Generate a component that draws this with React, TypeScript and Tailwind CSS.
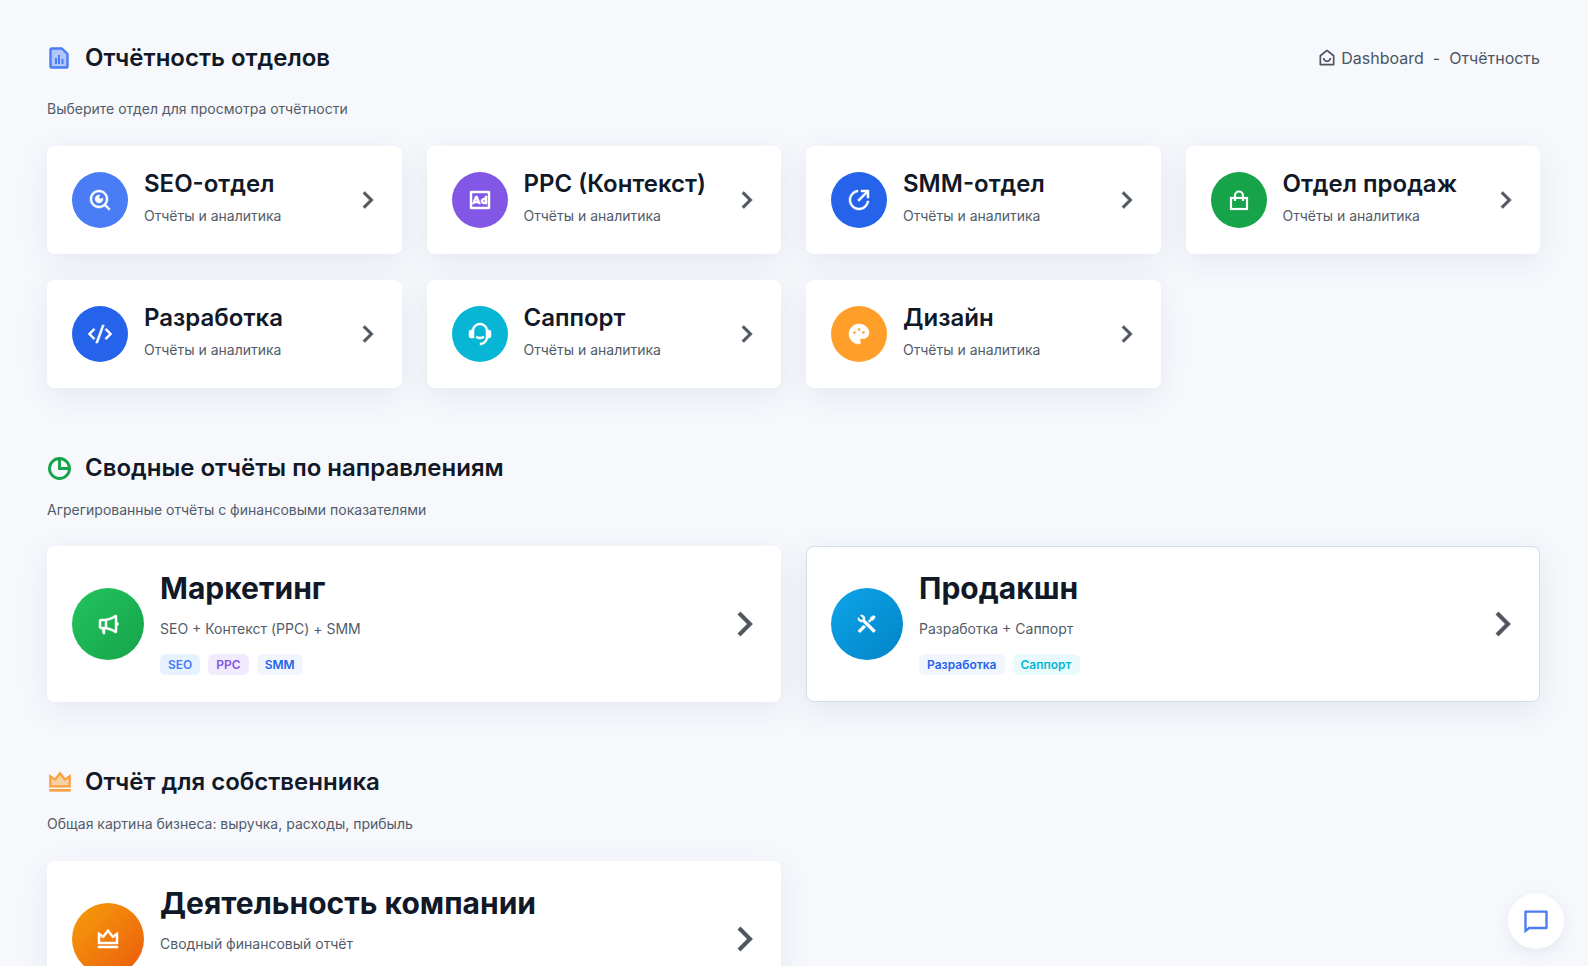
import React from 'react';
import {
  RiAdvertisementLine,
  RiArrowRightSLine,
  RiChat4Line,
  RiCodeSSlashLine,
  RiCustomerService2Fill,
  RiHomeSmile2Line,
  RiMegaphoneLine,
  RiPaletteFill,
  RiSearchEyeLine,
  RiShareCircleLine,
  RiToolsFill,
  RiVipCrownLine,
} from 'react-icons/ri';

type IconType = React.ComponentType<{ className?: string }>;

function BagIcon() {
  return (
    <svg viewBox="0 0 24 24" fill="none" stroke="currentColor" strokeWidth="2.2" className="h-[24px] w-[24px] text-white">
      <rect x="4" y="10" width="16" height="11" />
      <path d="M8 13V7.5a4 4 0 0 1 8 0V13" />
    </svg>
  );
}

function FileIcon() {
  return (
    <svg viewBox="0 0 24 24" className="h-[24px] w-[24px] text-[#4a7cf6]">
      <path d="M15 2.5H4.5a1 1 0 0 0-1 1v17a1 1 0 0 0 1 1h15a1 1 0 0 0 1-1V8z" fill="currentColor" fillOpacity="0.4" stroke="currentColor" strokeWidth="2.4" strokeLinejoin="round" />
      <path d="M8 12h2v6H8zM11 9h2v9h-2zM14.5 13h2v5h-2z" fill="currentColor" />
    </svg>
  );
}

function PieIcon() {
  return (
    <svg viewBox="0 0 24 24" fill="none" stroke="currentColor" strokeWidth="2.8" className="h-[25px] w-[25px] text-[#16a34a]">
      <circle cx="12" cy="12" r="9.6" />
      <path d="M12 2.5V12h9.5" />
    </svg>
  );
}

function CrownIcon() {
  return (
    <svg viewBox="0 0 24 24" className="h-[26px] w-[26px] text-[#fb9f3c]">
      <path d="M3 6.5l4.5 3.2L12 4l4.5 5.7L21 6.5V16H3z" fill="currentColor" fillOpacity="0.45" stroke="currentColor" strokeWidth="2" />
      <path d="M2 18.5h20v2.4H2z" fill="currentColor" />
    </svg>
  );
}

const departments: { title: string; icon: IconType; color: string }[] = [
  { title: 'SEO-отдел', icon: RiSearchEyeLine, color: 'bg-[#4a7cf6]' },
  { title: 'PPC (Контекст)', icon: RiAdvertisementLine, color: 'bg-[#8257e6]' },
  { title: 'SMM-отдел', icon: RiShareCircleLine, color: 'bg-[#2563eb]' },
  { title: 'Отдел продаж', icon: BagIcon, color: 'bg-[#16a34a]' },
  { title: 'Разработка', icon: RiCodeSSlashLine, color: 'bg-[#2563eb]' },
  { title: 'Саппорт', icon: RiCustomerService2Fill, color: 'bg-[#06b6d4]' },
  { title: 'Дизайн', icon: RiPaletteFill, color: 'bg-[#ff9f2a]' },
];

function SectionHead({ icon, title, subtitle, action, gap }: { icon: React.ReactNode; title: string; subtitle: string; action?: React.ReactNode; gap: string }) {
  return (
    <div>
      <div className="flex items-center justify-between">
        <div className="flex items-center">
          <div className="flex w-[38px] items-center">{icon}</div>
          <h2 className="text-[24px] leading-[32px] font-semibold text-[#111827]">{title}</h2>
        </div>
        {action}
      </div>
      <p className={`text-[14px] leading-[20px] text-[#525b69] ${gap}`}>{subtitle}</p>
    </div>
  );
}

function DeptCard({ title, icon: Icon, color }: { title: string; icon: IconType; color: string }) {
  return (
    <div className="flex h-[108px] items-center rounded-[8px] bg-white pr-[18px] pl-[25px] shadow-[0_8px_30px_rgba(80,96,140,0.1)]">
      <div className={`flex h-[56px] w-[56px] shrink-0 items-center justify-center rounded-full ${color}`}>
        <Icon className="h-[24px] w-[24px] stroke-[0.5] text-white" />
      </div>
      <div className="ml-[16px] flex-1 pb-[6px]">
        <div className="text-[24px] leading-[32px] font-semibold text-[#111827]">{title}</div>
        <div className="mt-[6px] text-[14px] leading-[20px] text-[#525b69]">Отчёты и аналитика</div>
      </div>
      <RiArrowRightSLine className="h-[32px] w-[32px] stroke-[0.4] text-[#50565f]" />
    </div>
  );
}

function WideCard({ title, subtitle, icon: Icon, gradient, tags, outlined }: {
  title: string;
  subtitle: string;
  icon: IconType;
  gradient: string;
  tags?: { label: string; cls: string }[];
  outlined?: boolean;
}) {
  return (
    <div className={`flex h-[156px] items-center rounded-[8px] bg-white pr-[13px] ${outlined ? 'border border-[#d5dcee] pl-[24px] shadow-[0_8px_30px_rgba(80,96,140,0.12)]' : 'pl-[25px] shadow-[0_8px_30px_rgba(80,96,140,0.1)]'}`}>
      <div className={`flex h-[72px] w-[72px] shrink-0 items-center justify-center rounded-full ${gradient}`}>
        <Icon className="h-[24px] w-[24px] stroke-[0.5] text-white" />
      </div>
      <div className={`ml-[16px] flex-1 self-start ${outlined ? 'pt-[21px]' : 'pt-[22px]'}`}>
        <div className="text-[30px] leading-[40px] font-bold text-[#111827]">{title}</div>
        <div className="mt-[11px] text-[14px] leading-[20px] text-[#525b69]">{subtitle}</div>
        {tags && (
          <div className="mt-[15px] flex gap-[8px]">
            {tags.map((t) => (
              <span key={t.label} className={`rounded-[6px] px-[8px] py-[2px] text-[12px] leading-[17px] font-semibold ${t.cls}`}>
                {t.label}
              </span>
            ))}
          </div>
        )}
      </div>
      <RiArrowRightSLine className="h-[46px] w-[46px] stroke-[0.2] text-[#50565f]" />
    </div>
  );
}

export default function App() {
  return (
    <div className="relative h-[966px] overflow-hidden bg-[#f6f8fc] pt-[42px] pr-[48px] pl-[47px] font-['Inter',sans-serif]">
      <SectionHead
        gap="mt-[25px]"
        icon={<FileIcon />}
        title="Отчётность отделов"
        subtitle="Выберите отдел для просмотра отчётности"
        action={
          <div className="flex items-center text-[16px] text-[#4b5563]">
            <RiHomeSmile2Line className="mr-[4px] h-[20px] w-[20px]" />
            <span>Dashboard</span>
            <span className="mx-[9px]">-</span>
            <span>Отчётность</span>
          </div>
        }
      />
      <div className="mt-[27px] grid grid-cols-4 gap-x-[25px] gap-y-[26px]">
        {departments.map((d) => (
          <DeptCard key={d.title} {...d} />
        ))}
      </div>

      <div className="mt-[64px]">
        <SectionHead
          gap="mt-[16px]"
          icon={<PieIcon />}
          title="Сводные отчёты по направлениям"
          subtitle="Агрегированные отчёты с финансовыми показателями"
        />
      </div>
      <div className="mt-[26px] grid grid-cols-2 gap-[25px]">
        <WideCard
          title="Маркетинг"
          subtitle="SEO + Контекст (PPC) + SMM"
          icon={RiMegaphoneLine}
          gradient="bg-gradient-to-br from-[#22c55e] to-[#16a34a]"
          tags={[
            { label: 'SEO', cls: 'bg-[#e6f2ff] text-[#4a7cf6]' },
            { label: 'PPC', cls: 'bg-[#f1ebfd] text-[#8257e6]' },
            { label: 'SMM', cls: 'bg-[#f0f5fe] text-[#2563eb]' },
          ]}
        />
        <WideCard
          outlined
          title="Продакшн"
          subtitle="Разработка + Саппорт"
          icon={RiToolsFill}
          gradient="bg-gradient-to-br from-[#0ea5e9] to-[#0284c7]"
          tags={[
            { label: 'Разработка', cls: 'bg-[#f0f5fe] text-[#2563eb]' },
            { label: 'Саппорт', cls: 'bg-[#e9fafc] text-[#06b6d4]' },
          ]}
        />
      </div>

      <div className="mt-[64px]">
        <SectionHead
          gap="mt-[16px]"
          icon={<CrownIcon />}
          title="Отчёт для собственника"
          subtitle="Общая картина бизнеса: выручка, расходы, прибыль"
        />
      </div>
      <div className="mt-[27px] grid grid-cols-2 gap-[25px]">
        <WideCard
          title="Деятельность компании"
          subtitle="Сводный финансовый отчёт"
          icon={RiVipCrownLine}
          gradient="bg-gradient-to-br from-[#f59e0b] to-[#ea580c]"
        />
      </div>

      <button className="absolute right-[24px] bottom-[17px] flex h-[56px] w-[56px] items-center justify-center rounded-full bg-white shadow-[0_4px_16px_rgba(100,116,160,0.12)]">
        <RiChat4Line className="h-[28px] w-[28px] text-[#4a7cf6]" />
      </button>
    </div>
  );
}
